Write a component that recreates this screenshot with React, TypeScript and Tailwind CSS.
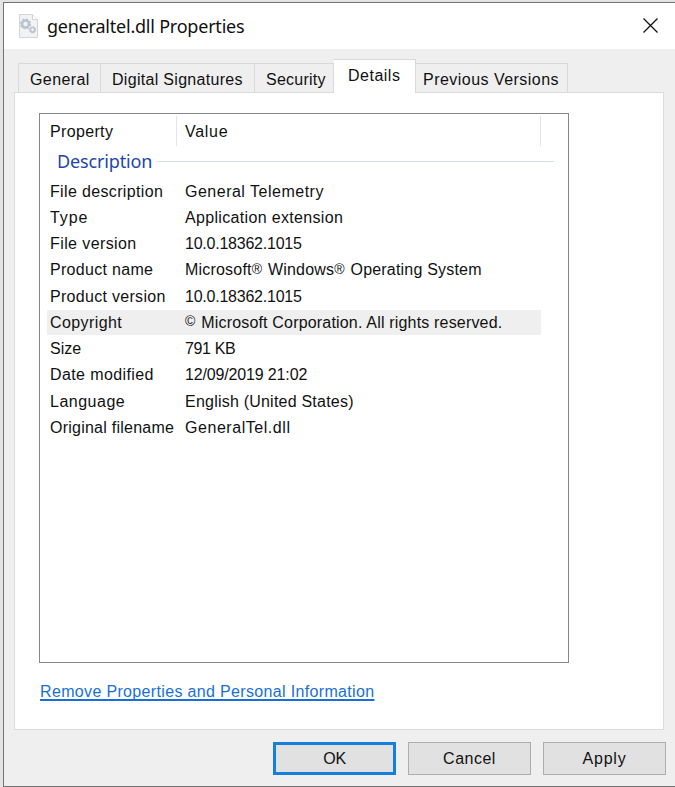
import React from "react";

type Row = { name: string; value: string; nt: string; vt: string; selected?: boolean };

const rows: Row[] = [
  { name: "File description", value: "General Telemetry", nt: "tracking-[0.35px]", vt: "tracking-[0.5px]" },
  { name: "Type", value: "Application extension", nt: "tracking-[0.9px]", vt: "tracking-[0.33px]" },
  { name: "File version", value: "10.0.18362.1015", nt: "tracking-[0.4px]", vt: "tracking-[-0.23px]" },
  { name: "Product name", value: "Microsoft® Windows® Operating System", nt: "tracking-[0.3px]", vt: "tracking-[0.2px]" },
  { name: "Product version", value: "10.0.18362.1015", nt: "tracking-[0.3px]", vt: "tracking-[-0.23px]" },
  { name: "Copyright", value: "© Microsoft Corporation. All rights reserved.", nt: "tracking-[0.4px]", vt: "tracking-[0.18px]", selected: true },
  { name: "Size", value: "791 KB", nt: "tracking-[0px]", vt: "tracking-[-0.35px]" },
  { name: "Date modified", value: "12/09/2019 21:02", nt: "tracking-[0.4px]", vt: "tracking-[-0.15px]" },
  { name: "Language", value: "English (United States)", nt: "tracking-[0.5px]", vt: "tracking-[0.22px]" },
  { name: "Original filename", value: "GeneralTel.dll", nt: "tracking-[0.24px]", vt: "tracking-[0.55px]" },
];

function Gear({ x, y, r }: { x: number; y: number; r: number }) {
  return (
    <g transform={`translate(${x} ${y})`}>
      <circle r={r} fill="none" stroke="#bcc4cb" strokeWidth={r * 0.75} />
      <circle r={r * 1.42} fill="none" stroke="#bcc4cb" strokeWidth={r * 0.35} strokeDasharray={`${r * 0.5576} ${r * 0.5576}`} />
    </g>
  );
}

function DllIcon() {
  return (
    <svg width="19" height="24" viewBox="0 0 19 24" className="shrink-0">
      <path d="M.5.5h13l5 5v18H.5z" fill="#f1f2f3" stroke="#d3d5d7" />
      <path d="M13.5.5v5h5" fill="#fff" stroke="#cfd2d5" />
      <Gear x={6.5} y={10} r={3.5} />
      <Gear x={13.6} y={15.8} r={2.3} />
    </svg>
  );
}

// Legal marks are set smaller and slightly raised next to the body text.
function MarkedText({ text }: { text: string }) {
  return (
    <>
      {text.split(/([®©])/).map((part, i) =>
        part === "®" || part === "©" ? (
          <span key={i} className="inline-block w-[11.6px] align-[1.5px] text-[14px] leading-none tracking-normal">{part}</span>
        ) : (
          part
        ),
      )}
    </>
  );
}

function Tab({ label, size, tracking }: { label: string; size: string; tracking: string }) {
  return (
    <div className={`h-[29px] shrink-0 border-t border-r border-[#d9d9d9] pt-[6px] leading-5 ${size} ${tracking}`}>{label}</div>
  );
}

export default function App() {
  return (
    <div className="flex h-[787px] w-[675px] flex-col overflow-hidden bg-[#e4e4e4] pt-[2px] pl-[3px] font-['Liberation_Sans',Arial,sans-serif] text-[16px] whitespace-nowrap text-[#111]">
      <div className="flex h-[785px] flex-col border-t border-b border-l border-[#737373] bg-[#efefef]">
        <header className="flex h-[46px] shrink-0 items-center bg-white pl-[15px]">
          <DllIcon />
          <h1 className="ml-[9px] font-['Noto_Sans',sans-serif] text-[18px] leading-6 tracking-[-0.22px]">generaltel.dll Properties</h1>
          <svg width="17" height="17" viewBox="0 0 17 17" className="mr-[16px] mb-[2px] ml-auto">
            <path d="M1.5 1.5 15.5 15.5M15.5 1.5 1.5 15.5" stroke="#111" strokeWidth="1.3" fill="none" />
          </svg>
        </header>

        <nav className="flex h-[43px] shrink-0 items-end pl-[14px]">
          <div className="flex border-l border-[#d9d9d9]">
            <Tab label="General" size="w-[82px] pl-[11px]" tracking="tracking-[0.4px]" />
            <Tab label="Digital Signatures" size="w-[154px] pl-[11px]" tracking="tracking-[0.3px]" />
            <Tab label="Security" size="w-[79px] pl-[11px]" tracking="tracking-[0.25px]" />
          </div>
          <div className="z-10 -mb-px h-[34px] w-[82px] border-t border-r border-[#d9d9d9] bg-white pt-[6px] pl-[14px] leading-5 tracking-[0.5px]">Details</div>
          <Tab label="Previous Versions" size="w-[152px] pl-[7px]" tracking="tracking-[0.47px]" />
        </nav>

        <main className="ml-[10px] h-[638px] w-[650px] shrink-0 border border-[#dcdcdc] bg-white pt-[20px] pl-[24px]">
          <section className="h-[550px] w-[530px] border border-[#828790] pt-[2px] pl-[7px]">
            <div className="flex h-[30px] leading-[32px]">
              <div className="w-[130px] border-r border-[#e5e5e5] pl-[3px] tracking-[0.35px]">Property</div>
              <div className="w-[364px] border-r border-[#e5e5e5] pl-[8px] tracking-[0.7px]">Value</div>
            </div>
            <div className="flex h-[30px] items-center pl-[10px]">
              <h2 className="w-[96px] font-['Noto_Sans',sans-serif] text-[18px] leading-[30px] tracking-[-0.15px] text-[#1e46a8]">Description</h2>
              <div className="ml-[4px] h-px w-[397px] bg-[#d5dfed]" />
            </div>
            <div className="pt-[2px]">
              {rows.map((row) => (
                <div key={row.name} className="flex h-[26.25px] w-[494px] items-center">
                  <div className={`flex h-[25px] w-full items-center leading-[25px] ${row.selected ? "bg-[#efefef]" : ""}`}>
                    <span className={`w-[138px] pl-[3px] ${row.nt}`}>{row.name}</span>
                    <span className={row.vt}><MarkedText text={row.value} /></span>
                  </div>
                </div>
              ))}
            </div>
          </section>
          <a className="mt-[19px] ml-px inline-block leading-5 tracking-[0.34px] text-[#1a6fd6] underline decoration-[1.5px] underline-offset-2 [text-decoration-skip-ink:none]">Remove Properties and Personal Information</a>
        </main>

        <footer className="flex gap-[12px] pt-[12px] pl-[269px]">
          <button className="h-[33px] w-[123px] border-[3px] border-[#1580dc] bg-[#e1e1e1] pt-px tracking-[-0.3px]">OK</button>
          <button className="h-[33px] w-[123px] border border-[#adadad] bg-[#e1e1e1] pt-px tracking-[0.5px]">Cancel</button>
          <button className="h-[33px] w-[123px] border border-[#adadad] bg-[#e1e1e1] pt-px tracking-[0.8px]">Apply</button>
        </footer>
      </div>
    </div>
  );
}
